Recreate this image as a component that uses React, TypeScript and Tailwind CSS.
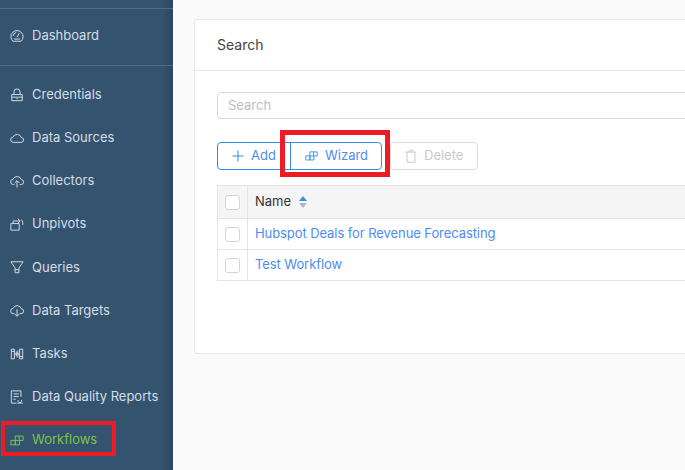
import type { ReactNode } from "react";

const font = { fontFamily: "Inter, sans-serif" };

const Svg = ({ children, className }: { children: ReactNode; className?: string }) => (
  <svg viewBox="0 0 16 16" fill="none" stroke="currentColor" strokeWidth="1.1" className={className}>
    {children}
  </svg>
);

const WorkflowIcon = ({ className }: { className?: string }) => (
  <Svg className={className}>
    <path d="M1 8.500h5v5H1zM6 8.500h5v5H6zM6 8.500v-5h4.500v5M10.500 3.500H15v5h-4" />
  </Svg>
);

const items: { label: string; icon: ReactNode }[] = [
  {
    label: "Credentials",
    icon: <path d="M2 7.500h12v7H2zM4.500 7.500V4.500a3.500 3.500 0 0 1 7 0v3M2 10.500h12M8 11.500v1.500" />,
  },
  {
    label: "Data Sources",
    icon: <path d="M4 13h8.500a2.800 2.800 0 0 0 .4-5.600A5 5 0 0 0 3.500 7 3 3 0 0 0 4 13z" />,
  },
  {
    label: "Collectors",
    icon: <path d="M5 12H4a3 3 0 0 1-.5-6 5 5 0 0 1 9.400.400A2.800 2.800 0 0 1 12.500 12H11M8 15.500V8M5.200 10.300 8 7.500l2.800 2.800" />,
  },
  {
    label: "Unpivots",
    icon: <path d="M1 7.500h9.500v7.500H1zM3.500 7.500V4.500h7.500M9 2l2.500 2.500L9 7M13 3a6 6 0 0 1 1.500 6" />,
  },
  {
    label: "Queries",
    icon: <path d="M1 2h14l-4.800 7v5.500H5.800V9zM5.800 11h4.400" />,
  },
  {
    label: "Data Targets",
    icon: <path d="M5 11H4a3 3 0 0 1-.5-6 5 5 0 0 1 9.400.400A2.800 2.800 0 0 1 12.500 11H11M8 6v8M5.200 11.200 8 14l2.800-2.800" />,
  },
  {
    label: "Tasks",
    icon: <path d="M1.500 2.500h3.500v11H1.500zM11 2.500h3.500v11H11zM5 8h6M7.200 5v6M9 4v8M1.500 5h3.500M11 11h3.500" />,
  },
  {
    label: "Data Quality Reports",
    icon: <path d="M7.500 15H1.500V1h11v7M4 4.500h6M4 7.500h6M4 10.500h2.500M9.500 11.500a2 2 0 1 0 3.500 0M8.500 15h6" />,
  },
];

const Checkbox = () => <div className="w-[15px] h-[15px] rounded-[3px] border border-[#d4d4d4] bg-white" />;

const NavRow = ({ label, icon }: { label: string; icon: ReactNode }) => (
  <div className="h-[43.2px] flex items-center pl-[10px]">
    <Svg className="w-[14px] h-[14px] shrink-0">{icon}</Svg>
    <span className="ml-[8px] whitespace-nowrap">{label}</span>
  </div>
);

export default function App() {
  return (
    <div style={font} className="relative w-[685px] h-[470px] overflow-hidden flex bg-[#fafafa]">
      {/* sidebar */}
      <aside className="w-[173px] shrink-0 h-full bg-gradient-to-r from-[#34536f] from-[94%] to-[#2a4660] text-[13px] text-[#d5dee6]">
        <div className="mt-[8px] border-t border-[#4f6b85] h-[57px] flex items-center pl-[10px] pb-[2px]">
          <Svg className="w-[14px] h-[14px] shrink-0">
            <path d="M3.300 14a7 7 0 1 1 9.400 0zM8 9.500l2.800-5M3.500 8a4.500 4.500 0 0 1 3.500-4M4.500 11.500h7" />
          </Svg>
          <span className="ml-[8px]">Dashboard</span>
        </div>
        <div className="border-t border-[#4f6b85] pt-[7px]">
          {items.map((it) => (
            <NavRow key={it.label} label={it.label} icon={it.icon} />
          ))}
          <div className="h-[43.2px] flex items-center pl-[10px] text-[#7cc34c]">
            <WorkflowIcon className="w-[14px] h-[14px]" />
            <span className="ml-[8px]">Workflows</span>
          </div>
        </div>
      </aside>

      {/* main */}
      <main className="flex-1 min-w-0 pl-[21px] pt-[19px]">
        <div className="w-[600px] h-[335px] bg-white border border-[#e8e8e8] rounded-[3px]">
          <div className="h-[51px] border-b border-[#e8e8e8] flex items-center pl-[22px] pb-[2px] text-[14px] text-[#444]">Search</div>
          <div className="pl-[22px] pt-[21px]">
            <div className="h-[27px] border border-[#d7d7d7] rounded-[4px] flex items-center pl-[10px] text-[13px] text-[#bdbdbd]">Search</div>

            <div className="mt-[23px] flex items-center text-[13px]">
              <div className="flex h-[28px] w-[165px] border border-[#2f8fe8] rounded-[4px] text-[#4d8cf0]">
                <div className="w-[73px] flex items-center pl-[14px] gap-[7px] border-r border-[#2f8fe8]">
                  <svg viewBox="0 0 12 12" className="w-[12px] h-[12px] text-[#2f8fe8]" fill="none" stroke="currentColor">
                    <path d="M6 .5v11M.5 6h11" />
                  </svg>
                  <span>Add</span>
                </div>
                <div className="flex-1 flex items-center pl-[14px] gap-[7px]">
                  <WorkflowIcon className="w-[13px] h-[13px] text-[#2f8fe8] -mt-[1px]" />
                  <span>Wizard</span>
                </div>
              </div>
              <div className="ml-[8px] h-[28px] w-[88px] border border-[#dcdcdc] rounded-[4px] flex items-center pl-[13px] gap-[6px] text-[#c9c9c9]">
                <Svg className="w-[14px] h-[14px]">
                  <path d="M3.500 3.500v11.500h9V3.500M1.500 3.500h13M6 3.500V1.500h4v2" />
                </Svg>
                <span>Delete</span>
              </div>
            </div>

            <div className="mt-[15px] border border-[#e4e4e4] border-r-0 text-[13px]">
              <div className="h-[33px] bg-[#f5f5f5] border-b border-[#e4e4e4] flex">
                <div className="w-[30px] border-r border-[#e4e4e4] flex items-center justify-center pr-[1px]"><Checkbox /></div>
                <div className="flex items-center pl-[7px] text-[#333]">
                  Name
                  <svg viewBox="0 0 8 12" className="ml-[8px] w-[8px] h-[12px]">
                    <path d="M4 0l4 5H0z" fill="#3b90e0" />
                    <path d="M4 12l4-5H0z" fill="#b5b5b5" />
                  </svg>
                </div>
              </div>
              <div className="h-[31px] flex border-b border-[#e4e4e4]">
                <div className="w-[30px] border-r border-[#e4e4e4] flex items-center justify-center pr-[1px]"><Checkbox /></div>
                <div className="flex items-center pl-[7px] text-[#4d8cf0] tracking-[-0.08px]">Hubspot Deals for Revenue Forecasting</div>
              </div>
              <div className="h-[30px] flex">
                <div className="w-[30px] border-r border-[#e4e4e4] flex items-center justify-center pr-[1px]"><Checkbox /></div>
                <div className="flex items-center pl-[7px] text-[#4d8cf0] tracking-[-0.08px]">Test Workflow</div>
              </div>
            </div>
          </div>
        </div>
      </main>

      {/* annotation boxes */}
      <div className="absolute left-[1px] top-[421px] w-[115px] h-[35px] border-[4px] border-[#ed1c24]" />
      <div className="absolute left-[280px] top-[130px] w-[110px] h-[47px] border-[5px] border-[#ed1c24]" />
    </div>
  );
}
